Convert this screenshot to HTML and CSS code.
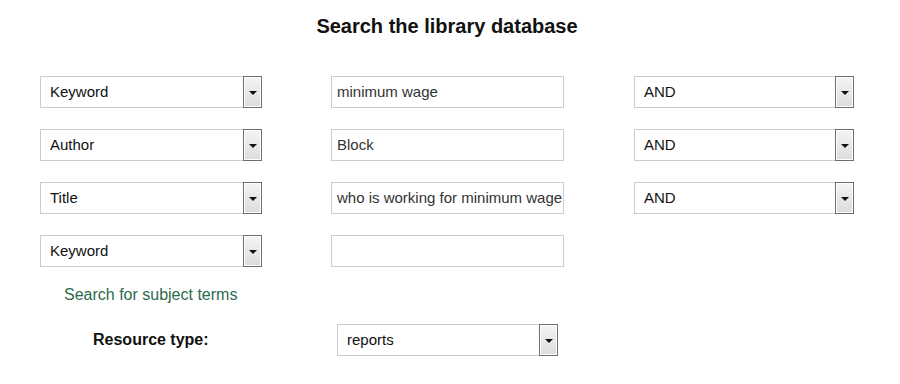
FILE: index.html
```html
<!DOCTYPE html>
<html lang="en">
<head>
  <meta charset="UTF-8">
  <title>Search the library database</title>
  <link rel="stylesheet" href="styles.css">
</head>
<body>
  <div class="search-page">
    <h1 class="title">Search the library database</h1>

    <div class="search-grid">
      <div class="select"><span>Keyword</span><span class="arrow"></span></div>
      <div class="textbox">minimum wage</div>
      <div class="select"><span>AND</span><span class="arrow"></span></div>

      <div class="select"><span>Author</span><span class="arrow"></span></div>
      <div class="textbox">Block</div>
      <div class="select"><span>AND</span><span class="arrow"></span></div>

      <div class="select"><span>Title</span><span class="arrow"></span></div>
      <div class="textbox">who is working for minimum wage</div>
      <div class="select"><span>AND</span><span class="arrow"></span></div>

      <div class="select"><span>Keyword</span><span class="arrow"></span></div>
      <div class="textbox"></div>
    </div>

    <a href="#" class="subject-link">Search for subject terms</a>

    <div class="resource-row">
      <div class="resource-label">Resource type:</div>
      <div class="select resource-select"><span>reports</span><span class="arrow"></span></div>
    </div>
  </div>
</body>
</html>
```

FILE: styles.css
```css
body {
  margin: 0;
  font-family: "Liberation Sans", Arial, sans-serif;
  background: #fff;
  color: #111;
}
.search-page {
  width: 900px;
}
.title {
  font-size: 20px;
  line-height: 24px;
  font-weight: bold;
  text-align: center;
  margin: 14px 0 0 -6px;
  color: #111;
}
.search-grid {
  display: grid;
  grid-template-columns: 222px 233px 221px;
  grid-auto-rows: 32px;
  column-gap: 69px;
  row-gap: 21px;
  padding-left: 40px;
  margin-top: 38px;
}
.search-grid > :nth-child(3n) {
  margin-left: 1px;
}
.select {
  display: flex;
  align-items: center;
  justify-content: space-between;
  border: 1px solid #ccc;
  border-right: none;
  box-sizing: border-box;
  height: 32px;
  background: #fff;
  font-size: 15px;
  padding-left: 9px;
}
.select > span:first-child {
  padding-bottom: 1px;
}
.arrow {
  width: 19px;
  height: 32px;
  box-sizing: border-box;
  border: 1px solid #6e6e6e;
  box-shadow: inset 0 0 0 1px #fff;
  background: linear-gradient(to bottom, #f4f4f4, #dcdcdc);
  position: relative;
  margin-top: -1px;
  margin-bottom: -1px;
}
.arrow::after {
  content: "";
  position: absolute;
  left: 5px;
  top: 14px;
  border-left: 4px solid transparent;
  border-right: 4px solid transparent;
  border-top: 4px solid #111;
}
.textbox {
  border: 1px solid #ccc;
  box-sizing: border-box;
  height: 32px;
  line-height: 29px;
  font-size: 15px;
  color: #333;
  padding-left: 5px;
  white-space: nowrap;
  overflow: hidden;
}
.subject-link {
  display: block;
  margin: 18px 0 0 64px;
  font-size: 16px;
  line-height: 20px;
  color: #2d6a4a;
  text-decoration: none;
}
.resource-row {
  display: flex;
  align-items: center;
  margin-top: 19px;
  padding-left: 93px;
}
.resource-label {
  width: 244px;
  font-size: 16px;
  font-weight: bold;
}
.resource-select {
  width: 221px;
}
```
